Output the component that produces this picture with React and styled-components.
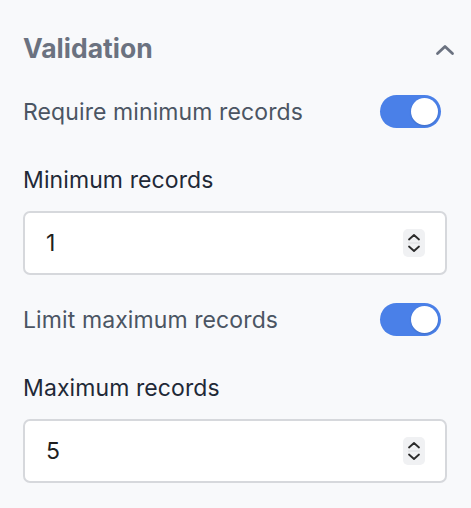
import React, { useState } from "react";
import styled, { createGlobalStyle } from "styled-components";

const GlobalStyle = createGlobalStyle`
  html, body {
    margin: 0;
    padding: 0;
    background: #f8f9fb;
    font-family: Inter, "Noto Sans", sans-serif;
  }
  * {
    box-sizing: border-box;
  }
`;

const Panel = styled.div`
  display: flex;
  flex-direction: column;
  width: 471px;
  min-height: 508px;
  padding: 28px 24px 0 23px;
  background: #f8f9fb;
`;

const Header = styled.div`
  display: flex;
  align-items: center;
  justify-content: space-between;
  height: 40px;
  margin-bottom: 27px;
`;

const Title = styled.h2`
  margin: 0;
  font-size: 26.5px;
  font-weight: 700;
  color: #6b7280;
`;

const Collapse = styled.button`
  display: flex;
  align-items: center;
  justify-content: center;
  padding: 0;
  margin: 4px -8px 0 0;
  width: 20px;
  height: 20px;
  border: none;
  background: none;
  color: #6b7280;
  cursor: pointer;
`;

const ToggleRow = styled.label`
  display: flex;
  align-items: center;
  justify-content: space-between;
  height: 33px;
  margin-top: ${(p) => p.$top || 0}px;
  font-size: 23px;
  letter-spacing: 0.1px;
  color: #4b5563;
`;

const Track = styled.span`
  display: flex;
  align-items: center;
  justify-content: ${(p) => (p.$on ? "flex-end" : "flex-start")};
  width: 61px;
  height: 33px;
  padding: 0 3px;
  border-radius: 17px;
  background: ${(p) => (p.$on ? "#4a80e8" : "#d1d5db")};
  margin-right: 6px;
`;

const Knob = styled.span`
  width: 27px;
  height: 27px;
  border-radius: 50%;
  background: #fff;
  box-shadow: 0 1px 2px rgba(0, 0, 0, 0.15);
`;

const FieldLabel = styled.div`
  margin-top: 38px;
  height: 28px;
  line-height: 28px;
  font-size: 23px;
  letter-spacing: 0.1px;
  color: #1f2937;
`;

const InputBox = styled.div`
  display: flex;
  align-items: center;
  margin-top: 17px;
  height: 64px;
  padding: 0 20px 0 21px;
  background: #fff;
  border: 2px solid #d6d8dc;
  border-radius: 7px;
`;

const NumberInput = styled.input`
  flex: 1;
  min-width: 0;
  border: none;
  outline: none;
  background: transparent;
  font-family: inherit;
  font-size: 23px;
  color: #1f1f1f;
  padding: 0;
  -moz-appearance: textfield;
  &::-webkit-inner-spin-button,
  &::-webkit-outer-spin-button {
    -webkit-appearance: none;
    margin: 0;
  }
`;

const Spinner = styled.span`
  display: flex;
  flex-direction: column;
  align-items: center;
  justify-content: center;
  width: 22px;
  height: 28px;
  border-radius: 5px;
  background: #f0f1f3;
`;

const Toggle = ({ on, onClick }) => (
  <Track $on={on} onClick={onClick}>
    <Knob />
  </Track>
);

const SpinIcon = () => (
  <Spinner>
    <svg width="22" height="28" viewBox="0 0 22 28" fill="none">
      <path d="M6 10.5 L11 6 L16 10.5" stroke="#2b2b2b" strokeWidth="1.8" strokeLinecap="round" strokeLinejoin="round" />
      <path d="M5 14 H17" stroke="#dcdde0" strokeWidth="1" />
      <path d="M6 17.5 L11 22 L16 17.5" stroke="#2b2b2b" strokeWidth="1.8" strokeLinecap="round" strokeLinejoin="round" />
    </svg>
  </Spinner>
);

const NumberField = ({ label, value, onChange }) => (
  <>
    <FieldLabel>{label}</FieldLabel>
    <InputBox>
      <NumberInput type="number" value={value} onChange={(e) => onChange(e.target.value)} />
      <SpinIcon />
    </InputBox>
  </>
);

export default function App() {
  const [requireMin, setRequireMin] = useState(true);
  const [limitMax, setLimitMax] = useState(true);
  const [min, setMin] = useState("1");
  const [max, setMax] = useState("5");

  return (
    <Panel>
      <GlobalStyle />
      <Header>
        <Title>Validation</Title>
        <Collapse aria-label="Collapse">
          <svg width="20" height="12" viewBox="0 0 20 12" fill="none">
            <path d="M2.5 9.5 L10 2.5 L17.5 9.5" stroke="currentColor" strokeWidth="2.8" strokeLinecap="round" strokeLinejoin="round" />
          </svg>
        </Collapse>
      </Header>

      <ToggleRow>
        Require minimum records
        <Toggle on={requireMin} onClick={() => setRequireMin(!requireMin)} />
      </ToggleRow>
      <NumberField label="Minimum records" value={min} onChange={setMin} />

      <ToggleRow $top={28}>
        Limit maximum records
        <Toggle on={limitMax} onClick={() => setLimitMax(!limitMax)} />
      </ToggleRow>
      <NumberField label="Maximum records" value={max} onChange={setMax} />
    </Panel>
  );
}
